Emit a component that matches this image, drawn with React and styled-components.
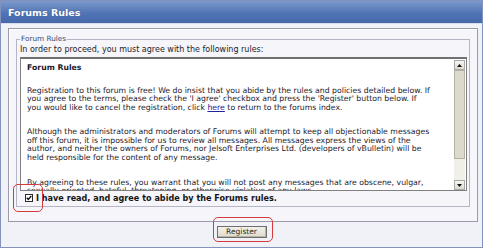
import React from 'react';
import styled, { createGlobalStyle } from 'styled-components';

const GlobalStyle = createGlobalStyle`
  html, body {
    margin: 0;
    padding: 0;
    background: #ffffff;
  }
  body {
    width: 485px;
    height: 248px;
    overflow: hidden;
    font-family: "DejaVu Sans", Verdana, sans-serif;
  }
`;

const Frame = styled.div`
  box-sizing: border-box;
  width: 483px;
  height: 248px;
  border: 1px solid #8292bd;
  background: #f1f1f8;
  display: flex;
  flex-direction: column;
`;

const Header = styled.div`
  height: 22px;
  flex: none;
  display: flex;
  align-items: center;
  padding-left: 7px;
  background: linear-gradient(#7d99cd, #5074b4 55%, #4468aa);
  border-bottom: 1px solid #d8ddec;
  color: #ffffff;
  font-size: 9.5px;
  font-weight: bold;
  text-shadow: 0 0 1px rgba(20, 40, 90, 0.4);
`;

const Body = styled.div`
  padding: 4px 4px 0 7px;
`;

const Panel = styled.div`
  border: 1px solid #9a9aa8;
  box-shadow: inset 1px 1px 0 #ffffff;
  background: #f5f5fa;
  padding: 6px 7px 14px 7px;
`;

const Fieldset = styled.fieldset`
  margin: 0;
  padding: 0 2px 3px 3px;
  border: 1px solid #b4b6c6;
  min-width: 0;
`;

const Legend = styled.legend`
  padding: 0 1px;
  font-size: 7.3px;
  line-height: 8px;
  color: #3a4c72;
`;

const Intro = styled.div`
  margin-top: 2px;
  font-size: 8px;
  line-height: 10px;
  color: #1c1c28;
  white-space: nowrap;
`;

const TextBox = styled.div`
  margin-top: 2px;
  height: 134px;
  box-sizing: border-box;
  display: flex;
  background: #ffffff;
  border: 1px solid #808080;
  border-top: 2px solid #707070;
`;

const Rules = styled.div`
  flex: 1;
  overflow: hidden;
  padding: 5px 0 0 6px;
  font-size: 7.75px;
  line-height: 8.7px;
  color: #1e1a2c;
  white-space: nowrap;
`;

const RulesTitle = styled.div`
  font-weight: bold;
`;

const Para = styled.p`
  margin: ${p => p.$gap || 14}px 0 0;
`;

const Link = styled.a`
  color: #22229a;
  text-decoration: underline;
`;

const ScrollBar = styled.div`
  width: 11px;
  flex: none;
  display: flex;
  flex-direction: column;
  background: #f0efe8;
  margin: 1px 1px 0 0;
`;

const ArrowButton = styled.div`
  height: 10px;
  flex: none;
  box-sizing: border-box;
  border: 1px solid #a8a8a8;
  background: linear-gradient(#f6f5f0, #dddbd2);
  display: flex;
  align-items: center;
  justify-content: center;
`;

const Thumb = styled.div`
  height: 89px;
  flex: none;
  box-sizing: border-box;
  border: 1px solid #b5b2a4;
  background: #dcd9cd;
`;

const Track = styled.div`
  flex: 1;
`;

const AgreeRow = styled.div`
  margin-top: 2px;
  height: 10px;
  display: flex;
  align-items: center;
  gap: 3px;
  padding-left: 5px;
`;

const Mark = styled.span`
  position: relative;
  width: 8px;
  height: 8px;
  box-sizing: border-box;
  border: 1px solid #2a2a2a;
  background: #ffffff;
  display: flex;
  align-items: center;
  justify-content: center;
`;

const Ring = styled.span`
  position: absolute;
  top: ${p => p.$top}px;
  left: ${p => p.$left}px;
  right: ${p => p.$right}px;
  bottom: ${p => p.$bottom}px;
  border: 1.5px solid #d63b3b;
  border-radius: 5px;
  pointer-events: none;
`;

const AgreeLabel = styled.span`
  font-size: 8.1px;
  font-weight: bold;
  color: #141414;
  white-space: nowrap;
`;

const Footer = styled.div`
  flex: 1;
  display: flex;
  justify-content: center;
  padding-top: 4px;
`;

const ButtonWrap = styled.span`
  position: relative;
  height: 12px;
`;

const Button = styled.button`
  display: block;
  width: 50px;
  height: 12px;
  padding: 0;
  border: 1px solid #6e6e6e;
  background: linear-gradient(#f4f2e8, #dedbcc);
  box-shadow: inset -1px -1px 0 #b8b5a6;
  font-family: "DejaVu Sans", Verdana, sans-serif;
  font-size: 7.5px;
  line-height: 10px;
  color: #2a2a2a;
`;

const Arrow = ({ down }) => (
  <svg width="5" height="3" viewBox="0 0 5 3">
    <path d={down ? 'M0 0H5L2.5 3Z' : 'M0 3H5L2.5 0Z'} fill="#111" />
  </svg>
);

const App = () => (
  <>
    <GlobalStyle />
    <Frame>
      <Header>Forums Rules</Header>
      <Body>
        <Panel>
          <Fieldset>
            <Legend>Forum Rules</Legend>
            <Intro>In order to proceed, you must agree with the following rules:</Intro>
            <TextBox>
              <Rules>
                <RulesTitle>Forum Rules</RulesTitle>
                <Para>
                  Registration to this forum is free! We do insist that you abide by the rules and policies detailed below. If<br />
                  you agree to the terms, please check the 'I agree' checkbox and press the 'Register' button below. If<br />
                  you would like to cancel the registration, click <Link>here</Link> to return to the forums index.
                </Para>
                <Para $gap={15}>
                  Although the administrators and moderators of Forums will attempt to keep all objectionable messages<br />
                  off this forum, it is impossible for us to review all messages. All messages express the views of the<br />
                  author, and neither the owners of Forums, nor Jelsoft Enterprises Ltd. (developers of vBulletin) will be<br />
                  held responsible for the content of any message.
                </Para>
                <Para $gap={16}>
                  By agreeing to these rules, you warrant that you will not post any messages that are obscene, vulgar,<br />
                  sexually-oriented, hateful, threatening, or otherwise violative of any laws.
                </Para>
              </Rules>
              <ScrollBar>
                <ArrowButton><Arrow /></ArrowButton>
                <Thumb />
                <Track />
                <ArrowButton><Arrow down /></ArrowButton>
              </ScrollBar>
            </TextBox>
            <AgreeRow>
              <Mark>
                <svg width="6" height="6" viewBox="0 0 6 6">
                  <path d="M0.8 2.8L2.3 4.4L5.3 1" fill="none" stroke="#111" strokeWidth="1.4" />
                </svg>
                <Ring $top={-11} $left={-13} $right={-11} $bottom={-11} />
              </Mark>
              <AgreeLabel>I have read, and agree to abide by the Forums rules.</AgreeLabel>
            </AgreeRow>
          </Fieldset>
        </Panel>
      </Body>
      <Footer>
        <ButtonWrap>
          <Button>Register</Button>
          <Ring $top={-9} $left={-4} $right={-6} $bottom={-4} />
        </ButtonWrap>
      </Footer>
    </Frame>
  </>
);

export default App;
